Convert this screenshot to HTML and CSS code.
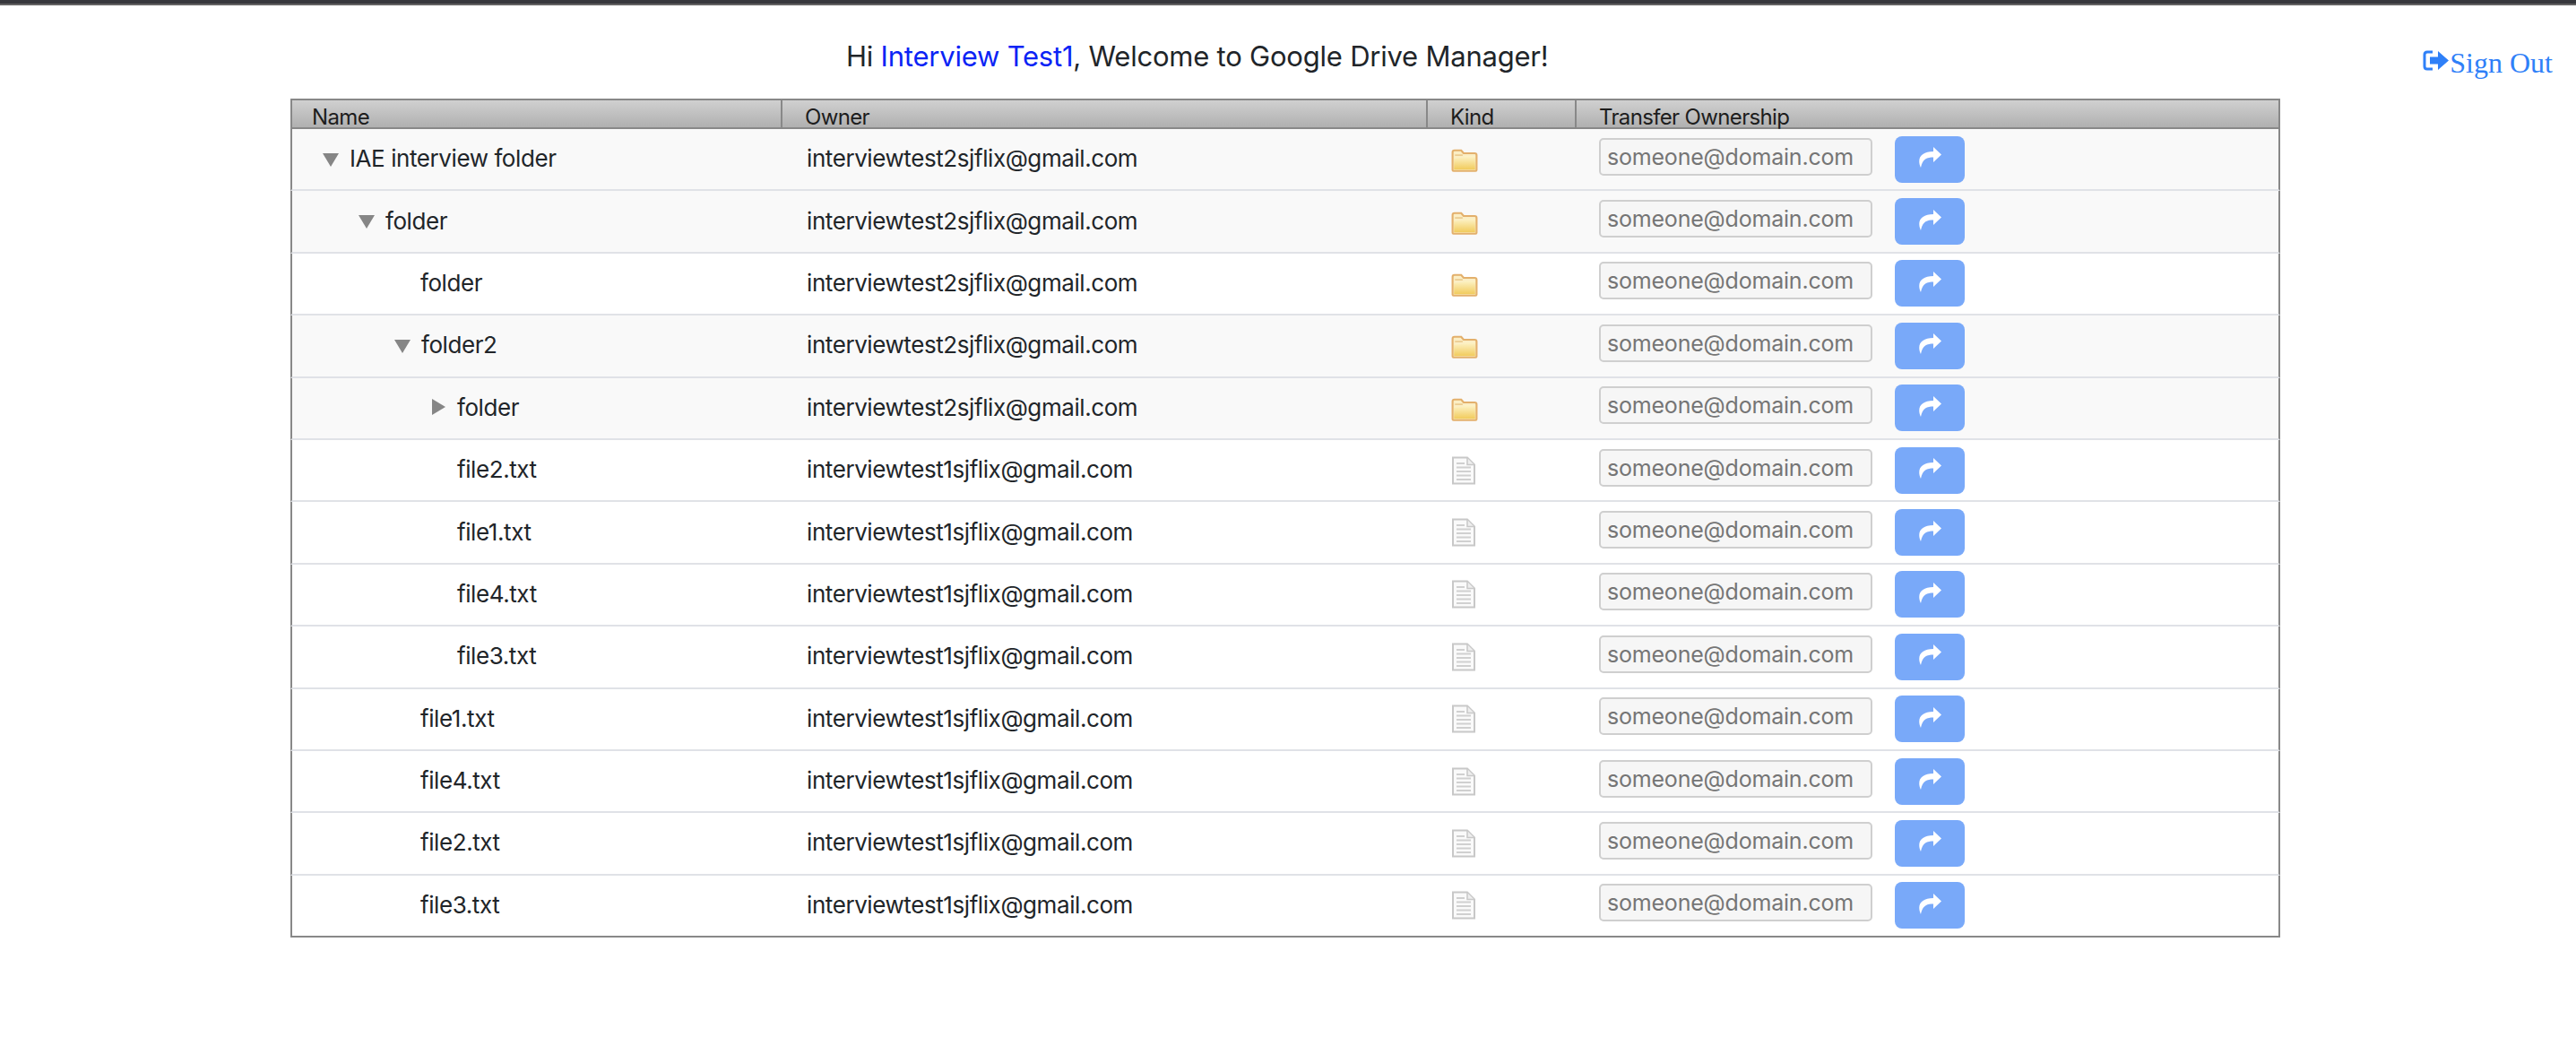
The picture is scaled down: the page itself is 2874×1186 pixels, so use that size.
FILE: index.html
```html
<!DOCTYPE html>
<html lang="en">
<head>
    <meta charset="UTF-8">
    <meta name="viewport" content="width=device-width, initial-scale=1.0">
    <title>Google Drive Manager</title>
    <link rel="stylesheet" href="styles.css">
</head>
<body>
    <svg class="icon-defs" aria-hidden="true">
        <defs>
            <linearGradient id="folderFill" x1="0" y1="0" x2="0" y2="1">
                <stop offset="0" stop-color="#fdf3c8"/>
                <stop offset="1" stop-color="#f1cb5c"/>
            </linearGradient>
            <symbol id="folder" viewBox="0 0 28 24">
                <path d="M1.5 22V3.5q0-2 2-2h7l2.5 3h11.500q2 0 2 2V22q0 1-1 1H2.500q-1 0-1-1z" fill="#fbeec4" stroke="#e3b06c" stroke-width="2"/>
                <path d="M3 10l9-1 2-1.500h11V21.500H3z" fill="url(#folderFill)"/>
                <path d="M4 6.500h8" stroke="#e9c98c" stroke-width="1.500"/>
            </symbol>
            <symbol id="doc" viewBox="0 0 28 32">
                <path d="M2 1.500h16l8 8V30.500H2z" fill="#fafafa" stroke="#c8c8c8" stroke-width="2"/>
                <path d="M18 2v7.500h7.500" fill="#eeeeee" stroke="#c8c8c8" stroke-width="1.500"/>
                <path d="M6 8h9M6 12.500h16M6 17h16M6 21.500h16M6 26h16" stroke="#d0d0d0" stroke-width="2"/>
            </symbol>
            <symbol id="share" viewBox="0 0 26 23">
                <path d="M17 0L26 8.500 17 17V11.500C10 11.500 5 13 3 23-2 12 4 5 17 5z" fill="#fff"/>
            </symbol>
        </defs>
    </svg>

    <div class="top-bar"></div>

    <header class="page-header">
        <h1 class="welcome">Hi <span class="user-name">Interview Test1</span>, Welcome to Google Drive Manager!</h1>
        <a class="sign-out" href="#">
            <svg class="sign-out-icon" viewBox="0 0 30 24" aria-hidden="true">
                <path d="M11 2H5Q2 2 2 5V18Q2 21 5 21H11" fill="none" stroke="currentColor" stroke-width="3"/>
                <path d="M8 7.500h9V1l12 10.500L17 22v-6.500H8z" fill="currentColor"/>
            </svg>Sign Out
        </a>
    </header>

    <div class="tree-table">
        <div class="head-row">
            <div class="col-name">Name</div>
            <div class="col-owner">Owner</div>
            <div class="col-kind">Kind</div>
            <div class="col-transfer">Transfer Ownership</div>
        </div>

        <div class="row row-parent">
            <div class="col-name level-0"><span class="arrow arrow-open"></span>IAE interview folder</div>
            <div class="col-owner">interviewtest2sjflix@gmail.com</div>
            <div class="col-kind"><svg class="kind-folder"><use href="#folder"/></svg></div>
            <div class="col-transfer"><input class="owner-input" placeholder="someone@domain.com"><button class="send-btn"><svg class="send-icon"><use href="#share"/></svg></button></div>
        </div>
        <div class="row row-parent">
            <div class="col-name level-1"><span class="arrow arrow-open"></span>folder</div>
            <div class="col-owner">interviewtest2sjflix@gmail.com</div>
            <div class="col-kind"><svg class="kind-folder"><use href="#folder"/></svg></div>
            <div class="col-transfer"><input class="owner-input" placeholder="someone@domain.com"><button class="send-btn"><svg class="send-icon"><use href="#share"/></svg></button></div>
        </div>
        <div class="row">
            <div class="col-name level-2">folder</div>
            <div class="col-owner">interviewtest2sjflix@gmail.com</div>
            <div class="col-kind"><svg class="kind-folder"><use href="#folder"/></svg></div>
            <div class="col-transfer"><input class="owner-input" placeholder="someone@domain.com"><button class="send-btn"><svg class="send-icon"><use href="#share"/></svg></button></div>
        </div>
        <div class="row row-parent">
            <div class="col-name level-1b"><span class="arrow arrow-open"></span>folder2</div>
            <div class="col-owner">interviewtest2sjflix@gmail.com</div>
            <div class="col-kind"><svg class="kind-folder"><use href="#folder"/></svg></div>
            <div class="col-transfer"><input class="owner-input" placeholder="someone@domain.com"><button class="send-btn"><svg class="send-icon"><use href="#share"/></svg></button></div>
        </div>
        <div class="row row-parent">
            <div class="col-name level-2b"><span class="arrow arrow-closed"></span>folder</div>
            <div class="col-owner">interviewtest2sjflix@gmail.com</div>
            <div class="col-kind"><svg class="kind-folder"><use href="#folder"/></svg></div>
            <div class="col-transfer"><input class="owner-input" placeholder="someone@domain.com"><button class="send-btn"><svg class="send-icon"><use href="#share"/></svg></button></div>
        </div>
        <div class="row">
            <div class="col-name level-3">file2.txt</div>
            <div class="col-owner">interviewtest1sjflix@gmail.com</div>
            <div class="col-kind"><svg class="kind-doc"><use href="#doc"/></svg></div>
            <div class="col-transfer"><input class="owner-input" placeholder="someone@domain.com"><button class="send-btn"><svg class="send-icon"><use href="#share"/></svg></button></div>
        </div>
        <div class="row">
            <div class="col-name level-3">file1.txt</div>
            <div class="col-owner">interviewtest1sjflix@gmail.com</div>
            <div class="col-kind"><svg class="kind-doc"><use href="#doc"/></svg></div>
            <div class="col-transfer"><input class="owner-input" placeholder="someone@domain.com"><button class="send-btn"><svg class="send-icon"><use href="#share"/></svg></button></div>
        </div>
        <div class="row">
            <div class="col-name level-3">file4.txt</div>
            <div class="col-owner">interviewtest1sjflix@gmail.com</div>
            <div class="col-kind"><svg class="kind-doc"><use href="#doc"/></svg></div>
            <div class="col-transfer"><input class="owner-input" placeholder="someone@domain.com"><button class="send-btn"><svg class="send-icon"><use href="#share"/></svg></button></div>
        </div>
        <div class="row">
            <div class="col-name level-3">file3.txt</div>
            <div class="col-owner">interviewtest1sjflix@gmail.com</div>
            <div class="col-kind"><svg class="kind-doc"><use href="#doc"/></svg></div>
            <div class="col-transfer"><input class="owner-input" placeholder="someone@domain.com"><button class="send-btn"><svg class="send-icon"><use href="#share"/></svg></button></div>
        </div>
        <div class="row">
            <div class="col-name level-2">file1.txt</div>
            <div class="col-owner">interviewtest1sjflix@gmail.com</div>
            <div class="col-kind"><svg class="kind-doc"><use href="#doc"/></svg></div>
            <div class="col-transfer"><input class="owner-input" placeholder="someone@domain.com"><button class="send-btn"><svg class="send-icon"><use href="#share"/></svg></button></div>
        </div>
        <div class="row">
            <div class="col-name level-2">file4.txt</div>
            <div class="col-owner">interviewtest1sjflix@gmail.com</div>
            <div class="col-kind"><svg class="kind-doc"><use href="#doc"/></svg></div>
            <div class="col-transfer"><input class="owner-input" placeholder="someone@domain.com"><button class="send-btn"><svg class="send-icon"><use href="#share"/></svg></button></div>
        </div>
        <div class="row">
            <div class="col-name level-2">file2.txt</div>
            <div class="col-owner">interviewtest1sjflix@gmail.com</div>
            <div class="col-kind"><svg class="kind-doc"><use href="#doc"/></svg></div>
            <div class="col-transfer"><input class="owner-input" placeholder="someone@domain.com"><button class="send-btn"><svg class="send-icon"><use href="#share"/></svg></button></div>
        </div>
        <div class="row row-last">
            <div class="col-name level-2">file3.txt</div>
            <div class="col-owner">interviewtest1sjflix@gmail.com</div>
            <div class="col-kind"><svg class="kind-doc"><use href="#doc"/></svg></div>
            <div class="col-transfer"><input class="owner-input" placeholder="someone@domain.com"><button class="send-btn"><svg class="send-icon"><use href="#share"/></svg></button></div>
        </div>
    </div>
</body>
</html>
```

FILE: styles.css
```css
body {
    margin: 0;
    font-family: Inter, "Noto Sans", sans-serif;
    color: #212529;
    background-color: white;
}
.icon-defs {
    position: absolute;
    width: 0;
    height: 0;
}
.top-bar {
    height: 4px;
    background-color: #37383d;
    border-bottom: 2px solid #636363;
}
.page-header {
    display: flex;
    align-items: flex-start;
    height: 104px;
    padding-left: 944px;
    padding-right: 26px;
}
.welcome {
    margin: 38px 0 0;
    font-size: 31px;
    font-weight: 400;
    line-height: 38px;
    letter-spacing: -0.22px;
}
.user-name {
    color: #0b24f5;
}
.sign-out {
    display: flex;
    align-items: center;
    margin: 45px 0 0 auto;
    font-family: "Liberation Serif", serif;
    font-size: 32px;
    line-height: 38px;
    color: #2f80f8;
    text-decoration: none;
}
.sign-out-icon {
    width: 30px;
    height: 24px;
    margin-bottom: 4px;
}
.tree-table {
    width: 2220px;
    margin-left: 324px;
    box-sizing: border-box;
    font-size: 26px;
    letter-spacing: -0.42px;
}
.head-row {
    display: flex;
    height: 34px;
    box-sizing: border-box;
    border: 2px solid #888;
    background: linear-gradient(#d0d0d0, #b0b0b0);
    font-size: 24px;
    line-height: 38px;
    letter-spacing: -0.65px;
    color: #1d1d1d;
}
.head-row > div {
    height: 30px;
    padding-left: 25px;
    box-sizing: border-box;
    border-right: 2px solid #888;
}
.head-row > .col-name {
    padding-left: 22px;
}
.head-row > .col-transfer {
    border-right: none;
}
.row {
    display: flex;
    align-items: center;
    height: 69.4px;
    box-sizing: border-box;
    border-left: 2px solid #888;
    border-right: 2px solid #888;
    border-bottom: 2px solid #e0e2e7;
}
.row-parent {
    background-color: #f9f9f9;
}
.row-last {
    border-bottom-color: #888;
}
.col-name {
    width: 547px;
    flex: none;
    box-sizing: border-box;
}
.col-owner {
    width: 720px;
    flex: none;
    box-sizing: border-box;
}
.row .col-name, .row .col-owner {
    margin-bottom: 2px;
}
.row .col-owner {
    padding-left: 27px;
}
.col-kind {
    width: 166px;
    flex: none;
    box-sizing: border-box;
}
.row .col-kind {
    display: flex;
    padding-left: 26px;
}
.col-transfer {
    flex: 1;
    box-sizing: border-box;
}
.row .col-transfer {
    display: flex;
    align-items: center;
    padding-left: 25px;
}
.level-0 {
    display: flex;
    align-items: center;
    padding-left: 34px;
}
.level-1, .level-1b, .level-2b {
    display: flex;
    align-items: center;
}
.level-1 {
    padding-left: 74px;
}
.level-1b {
    padding-left: 114px;
}
.level-2b {
    padding-left: 154px;
}
.level-2 {
    padding-left: 143px;
}
.level-3 {
    padding-left: 184px;
}
.arrow {
    flex: none;
    width: 0;
    height: 0;
    margin-right: 12px;
}
.arrow-open {
    border-left: 9px solid transparent;
    border-right: 9px solid transparent;
    border-top: 15px solid #868686;
    margin-top: 3px;
}
.arrow-closed {
    border-top: 9px solid transparent;
    border-bottom: 9px solid transparent;
    border-left: 15px solid #868686;
    margin-left: 2px;
    margin-right: 13px;
}
.kind-folder {
    width: 30px;
    height: 26px;
    margin-top: 3px;
}
.kind-doc {
    width: 28px;
    height: 32px;
}
.owner-input {
    width: 305px;
    height: 42px;
    box-sizing: border-box;
    margin-top: -6px;
    padding: 0 7px;
    border: 2px solid #cfcfcf;
    border-radius: 5px;
    background-color: #f6f6f6;
    font-family: inherit;
    font-size: 25px;
    letter-spacing: -0.2px;
}
.owner-input::placeholder {
    color: #757575;
}
.send-btn {
    display: flex;
    align-items: center;
    justify-content: center;
    width: 78px;
    height: 52px;
    margin-left: 25px;
    padding: 0;
    border: none;
    border-radius: 8px;
    background-color: #79a9f9;
}
.send-icon {
    width: 26px;
    height: 23px;
    margin-bottom: 4px;
}
```
